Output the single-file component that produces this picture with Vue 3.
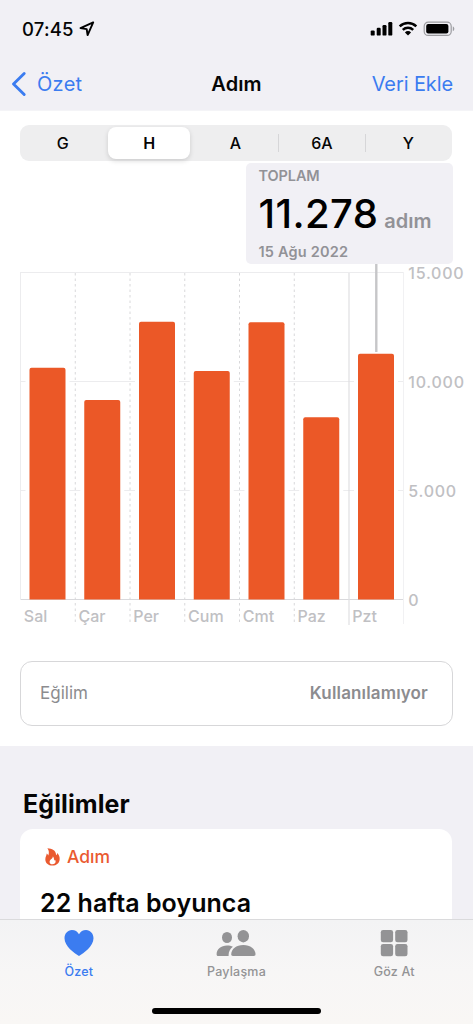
<script setup>
import { computed, ref } from "vue";

const ranges = ["G", "H", "A", "6A", "Y"];
const activeRange = ref("H");
const activeTab = ref("summary");

const days = [
  { label: "Sal", steps: 10630 },
  { label: "Çar", steps: 9150 },
  { label: "Per", steps: 12740 },
  { label: "Cum", steps: 10480 },
  { label: "Cmt", steps: 12720 },
  { label: "Paz", steps: 8360 },
  { label: "Pzt", steps: 11278 },
];

const ticks = [
  { value: 15000, label: "15.000" },
  { value: 10000, label: "10.000" },
  { value: 5000, label: "5.000" },
  { value: 0, label: "0" },
];

// plot area inside the chart svg
const left = 20.5;
const top = 8.5;
const plotHeight = 327;
const step = 54.75;
const barWidth = 36;

function yOf(value) {
  return top + plotHeight * (1 - value / 15000);
}

const bars = computed(() =>
  days.map((day, i) => {
    const x = left + 9 + i * step;
    const y = yOf(day.steps);
    const bottom = yOf(0);
    return {
      ...day,
      lineX: left + i * step,
      path: `M${x} ${bottom}V${y + 2}q0 -2 2 -2h${barWidth - 4}q2 0 2 2V${bottom}z`,
      haloX: x - 4,
      haloY: y - 1,
      haloHeight: bottom - y,
    };
  })
);
</script>

<template>
  <div class="screen">
    <header class="header">
      <div class="status">
        <span class="time">07:45</span>
        <svg class="location" width="16" height="16" viewBox="0 0 16 16">
          <path d="M14.2 1.4 1.5 7.1 7.7 8.1 8.6 14.1z" fill="none" stroke="#000" stroke-width="1.9" stroke-linejoin="round" />
        </svg>
        <svg class="status-icons" width="86" height="16" viewBox="0 0 86 16">
          <rect x="0.7" y="9.4" width="4" height="5.2" rx="1.2" />
          <rect x="6.7" y="6.8" width="4" height="7.8" rx="1.2" />
          <rect x="12.5" y="4" width="4" height="10.6" rx="1.2" />
          <rect x="18.3" y="1" width="4" height="13.6" rx="1.2" />
          <g fill="none" stroke="#000" stroke-width="2.5">
            <path d="M29.7 5.4a12 12 0 0 1 16.6 0" />
            <path d="M32.8 8.8a7.6 7.6 0 0 1 10.4 0" />
          </g>
          <path d="M38 14.4 34.9 11.4a4.4 4.4 0 0 1 6.2 0z" />
          <rect x="54.2" y="1.2" width="27" height="13.2" rx="4" fill="none" stroke="#9c9ca0" stroke-width="1.2" />
          <rect x="56.2" y="3" width="22.2" height="9.6" rx="2" />
          <path d="M82.8 5.5c2 .6 2 4 0 4.7z" fill="#9c9ca0" />
        </svg>
      </div>
      <nav class="nav">
        <button class="nav-btn back" type="button">
          <svg width="16" height="26" viewBox="0 0 16 26">
            <path d="M13.2 2.5 2.5 13 13.2 23.5" fill="none" stroke="currentColor" stroke-width="2.9" stroke-linecap="round" stroke-linejoin="round" />
          </svg>
          <span>Özet</span>
        </button>
        <h1 class="nav-title">Adım</h1>
        <button class="nav-btn add" type="button">Veri Ekle</button>
      </nav>
    </header>

    <section class="panel">
      <div class="segments">
        <button
          v-for="range in ranges"
          :key="range"
          class="segment"
          :class="{ active: range === activeRange }"
          type="button"
          @click="activeRange = range"
        >
          {{ range }}
        </button>
      </div>

      <div class="callout">
        <div class="callout-caption">TOPLAM</div>
        <div class="callout-value">
          <span class="number">11.278</span>
          <span class="unit">adım</span>
        </div>
        <div class="callout-caption date">15 Ağu 2022</div>
      </div>

      <svg class="chart" width="473" height="366" viewBox="0 0 473 366">
        <line
          v-for="tick in ticks"
          :key="tick.value"
          x1="20"
          x2="404"
          :y1="yOf(tick.value)"
          :y2="yOf(tick.value)"
          class="grid"
          :class="{ base: tick.value === 0 }"
        />
        <line x1="20.5" x2="20.5" y1="8" y2="336" class="edge" />
        <line x1="403.5" x2="403.5" y1="8" y2="360" class="edge light" />
        <template v-for="(bar, i) in bars" :key="bar.label">
          <line
            v-if="i > 0"
            :x1="bar.lineX"
            :x2="bar.lineX"
            y1="9"
            y2="361"
            :class="i === 6 ? 'week' : 'dashed'"
          />
          <rect :x="bar.haloX" :y="bar.haloY" width="44" :height="bar.haloHeight" fill="#fff" />
          <path :d="bar.path" class="bar" />
          <text :x="bar.lineX + 3.3" y="357.7" class="day">{{ bar.label }}</text>
        </template>
        <line x1="376.3" x2="376.3" y1="0" y2="88" class="marker" />
        <text
          v-for="tick in ticks"
          :key="tick.label"
          x="408.3"
          :y="yOf(tick.value) + 6"
          class="tick"
        >
          {{ tick.label }}
        </text>
      </svg>

      <div class="trend">
        <span class="trend-name">Eğilim</span>
        <span class="trend-value">Kullanılamıyor</span>
      </div>
    </section>

    <section class="trends">
      <h2>Eğilimler</h2>
      <article class="card">
        <div class="card-head">
          <svg width="15" height="18" viewBox="0 0 14 18" preserveAspectRatio="none">
            <path
              fill-rule="evenodd"
              d="M2.2.3C6.5.5 10.2 2.300 10.4 7.2c.8-.5.9-1.500.9-2.200C13 6.700 13.800 8.700 13.700 11c-.1 4.100-2.900 6.600-6.800 6.600S.2 14.900.3 11.200c.1-2.600 1.100-3.400 1.300-5.600.7.500 1.100 1.100 1.300 2 .9-1.500 1.200-4.800-.7-7.300zM7.300 8.300c.4 2.400-3 3-3 5.600 0 1.400 1.100 2.300 2.700 2.300s2.900-1 2.900-2.700c0-1-.4-1.600-.8-2.100 0 .6-.2 1-.7 1.200.2-1.700-.1-3.200-1.100-4.300z"
            />
          </svg>
          <span>Adım</span>
        </div>
        <div class="card-title">22 hafta boyunca</div>
      </article>
    </section>

    <footer class="tabbar">
      <div class="tabs">
        <button class="tab" :class="{ active: activeTab === 'summary' }" type="button" @click="activeTab = 'summary'">
          <svg width="30" height="28" viewBox="0 0 30 28">
            <path d="M15 27C10.5 24.3.5 17.5.5 9.3.5 4.6 3.7 1 7.900 1c3.200 0 5.600 1.500 7.100 4.300C16.500 2.500 18.900 1 22.100 1c4.200 0 7.400 3.600 7.400 8.300C29.500 17.500 19.500 24.300 15 27z" />
          </svg>
          <span>Özet</span>
        </button>
        <button class="tab" :class="{ active: activeTab === 'sharing' }" type="button" @click="activeTab = 'sharing'">
          <svg width="40" height="28" viewBox="0 0 40 28">
            <ellipse cx="11" cy="8.5" rx="5" ry="5.5" />
            <path d="M.6 25.2C.6 20 5 16.400 11 16.400c2.300 0 4.300.5 5.900 1.400-2.500 1.900-4.300 4.600-4.300 8.200v1H2.200c-1.100 0-1.600-.7-1.600-1.800z" />
            <ellipse cx="27.3" cy="7.2" rx="5.7" ry="6.2" />
            <path d="M15.2 25.3c0-5.200 5-9.300 12.100-9.300s12.200 4.100 12.200 9.300c0 1.100-.6 1.700-1.700 1.700H16.900c-1.100 0-1.700-.6-1.700-1.700z" />
          </svg>
          <span>Paylaşma</span>
        </button>
        <button class="tab" :class="{ active: activeTab === 'browse' }" type="button" @click="activeTab = 'browse'">
          <svg width="28" height="28" viewBox="0 0 28 28">
            <rect x="0.8" y="1" width="12.3" height="12.2" rx="2.3" />
            <rect x="15.2" y="1" width="12.3" height="12.2" rx="2.3" />
            <rect x="0.8" y="15" width="12.3" height="12.2" rx="2.3" />
            <rect x="15.2" y="15" width="12.3" height="12.2" rx="2.3" />
          </svg>
          <span>Göz At</span>
        </button>
      </div>
      <div class="home-indicator"></div>
    </footer>
  </div>
</template>

<style>
body {
  margin: 0;
}
</style>

<style scoped>
.screen {
  width: 473px;
  height: 1024px;
  overflow: hidden;
  display: flex;
  flex-direction: column;
  background: #f1f0f5;
  color: #050505;
  font-family: Inter, "Liberation Sans", sans-serif;
}
button {
  border: 0;
  padding: 0;
  margin: 0;
  background: none;
  font: inherit;
  color: inherit;
  cursor: pointer;
}
svg {
  display: block;
  flex: none;
}
.header {
  flex: none;
  height: 111px;
  box-sizing: border-box;
  border-bottom: 1px solid #f4f4f7;
}
.status {
  height: 58px;
  display: flex;
  align-items: center;
  padding: 0 17px 0 22px;
}
.time {
  width: 57px;
  font-size: 18.5px;
  font-weight: 500;
  letter-spacing: 0.2px;
}
.status-icons {
  margin-left: auto;
}
.nav {
  height: 52px;
  display: grid;
  grid-template-columns: 1fr auto 1fr;
  align-items: center;
  padding: 0 20px 0 11px;
  font-size: 20px;
}
.nav-btn {
  color: #3b7cf0;
}
.back {
  display: flex;
  align-items: center;
  gap: 10px;
  letter-spacing: 0.3px;
}
.add {
  justify-self: end;
  letter-spacing: -0.1px;
}
.nav-title {
  margin: 0 0 0 9px;
  font-size: 20px;
  font-weight: 600;
  letter-spacing: 0.1px;
}
.panel {
  flex: none;
  height: 635px;
  display: flex;
  flex-direction: column;
  background: #fff;
}
.segments {
  flex: none;
  height: 36px;
  box-sizing: border-box;
  margin: 14px 21px 0 20px;
  padding: 2px 3px 2px 2px;
  border-radius: 9px;
  background: #eeeeef;
  display: grid;
  grid-template-columns: repeat(5, 1fr);
  column-gap: 5px;
}
.segment {
  position: relative;
  font-size: 16px;
  font-weight: 500;
  border-radius: 8px;
}
.segment.active {
  background: #fff;
  font-weight: 600;
  box-shadow: 0 2px 5px rgba(0, 0, 0, 0.14);
}
.segment:nth-child(n + 4)::before {
  content: "";
  position: absolute;
  left: -3px;
  top: 7px;
  width: 1px;
  height: 18px;
  background: #d6d6d8;
}
.callout {
  flex: none;
  width: 207px;
  height: 101px;
  box-sizing: border-box;
  margin: 2px 20px 0 auto;
  padding: 3px 0 0 12.5px;
  border-radius: 5px;
  background: #f1f0f5;
}
.callout-caption {
  height: 20px;
  line-height: 20px;
  font-size: 14.5px;
  font-weight: 600;
  letter-spacing: -0.1px;
  color: #929297;
}
.callout-caption.date {
  letter-spacing: 0.2px;
}
.callout-value {
  height: 56px;
  line-height: 55px;
  display: flex;
  align-items: baseline;
  gap: 6px;
}
.number {
  font-size: 40px;
  font-weight: 500;
  letter-spacing: 0.4px;
  color: #000;
}
.unit {
  font-size: 20px;
  font-weight: 600;
  color: #929297;
}
.chart {
  margin-bottom: 30.5px;
}
.grid {
  stroke: #ececee;
}
.grid.base {
  stroke: #d9d9dc;
}
.edge {
  stroke: #ececee;
}
.edge.light {
  stroke: #f1f1f3;
}
.dashed {
  stroke: #d8d8da;
  stroke-dasharray: 2.5 3;
}
.week {
  stroke: #e0e0e2;
  stroke-width: 1.2;
}
.bar {
  fill: #eb5827;
}
.marker {
  stroke: #c6c6c8;
  stroke-width: 2.4;
}
.day,
.tick {
  fill: #c0c0c3;
  font-size: 16px;
  font-weight: 450;
}
.tick {
  letter-spacing: 0.75px;
}
.trend {
  flex: none;
  height: 65px;
  box-sizing: border-box;
  margin: 0 20px;
  padding: 0 24px 0 19px;
  border: 1.5px solid #d7d7d9;
  border-radius: 12px;
  display: flex;
  align-items: center;
  justify-content: space-between;
  font-size: 17px;
  color: #8c8c8f;
}
.trend-value {
  font-weight: 600;
  letter-spacing: 0.15px;
}
.trends {
  flex: none;
  height: 173px;
  overflow: hidden;
  padding: 0 21px 0 20px;
}
.trends h2 {
  margin: 41px 0 8px 3px;
  height: 34px;
  line-height: 34px;
  font-size: 25px;
  font-weight: 700;
  letter-spacing: 0.1px;
}
.card {
  height: 120px;
  box-sizing: border-box;
  padding: 14px 20px;
  border-radius: 13px;
  background: #fff;
}
.card-head {
  display: flex;
  align-items: center;
  gap: 7px;
  height: 27px;
  padding-left: 5px;
  font-size: 17.5px;
  font-weight: 500;
  color: #ea5a30;
}
.card-head svg {
  fill: #ea5a30;
}
.card-title {
  margin-top: 16px;
  height: 34px;
  line-height: 34px;
  font-size: 25px;
  font-weight: 600;
  letter-spacing: 0.05px;
}
.tabbar {
  flex: none;
  height: 105px;
  box-sizing: border-box;
  border-top: 1px solid #dadadc;
  background: linear-gradient(#f3f3f4, #f7f6f6 50%, #f9f7f5);
  display: flex;
  flex-direction: column;
  align-items: center;
}
.tabs {
  width: 473px;
  height: 88px;
  display: grid;
  grid-template-columns: repeat(3, 1fr);
}
.tab {
  display: flex;
  flex-direction: column;
  align-items: center;
  padding-top: 9px;
  gap: 5px;
  font-size: 12.5px;
  font-weight: 500;
  line-height: 20px;
  letter-spacing: 0.2px;
  color: #939395;
}
.tab svg {
  fill: currentColor;
}
.tab.active {
  color: #3b7cf0;
}
.home-indicator {
  width: 169px;
  height: 6px;
  border-radius: 3px;
  background: #000;
}
</style>
